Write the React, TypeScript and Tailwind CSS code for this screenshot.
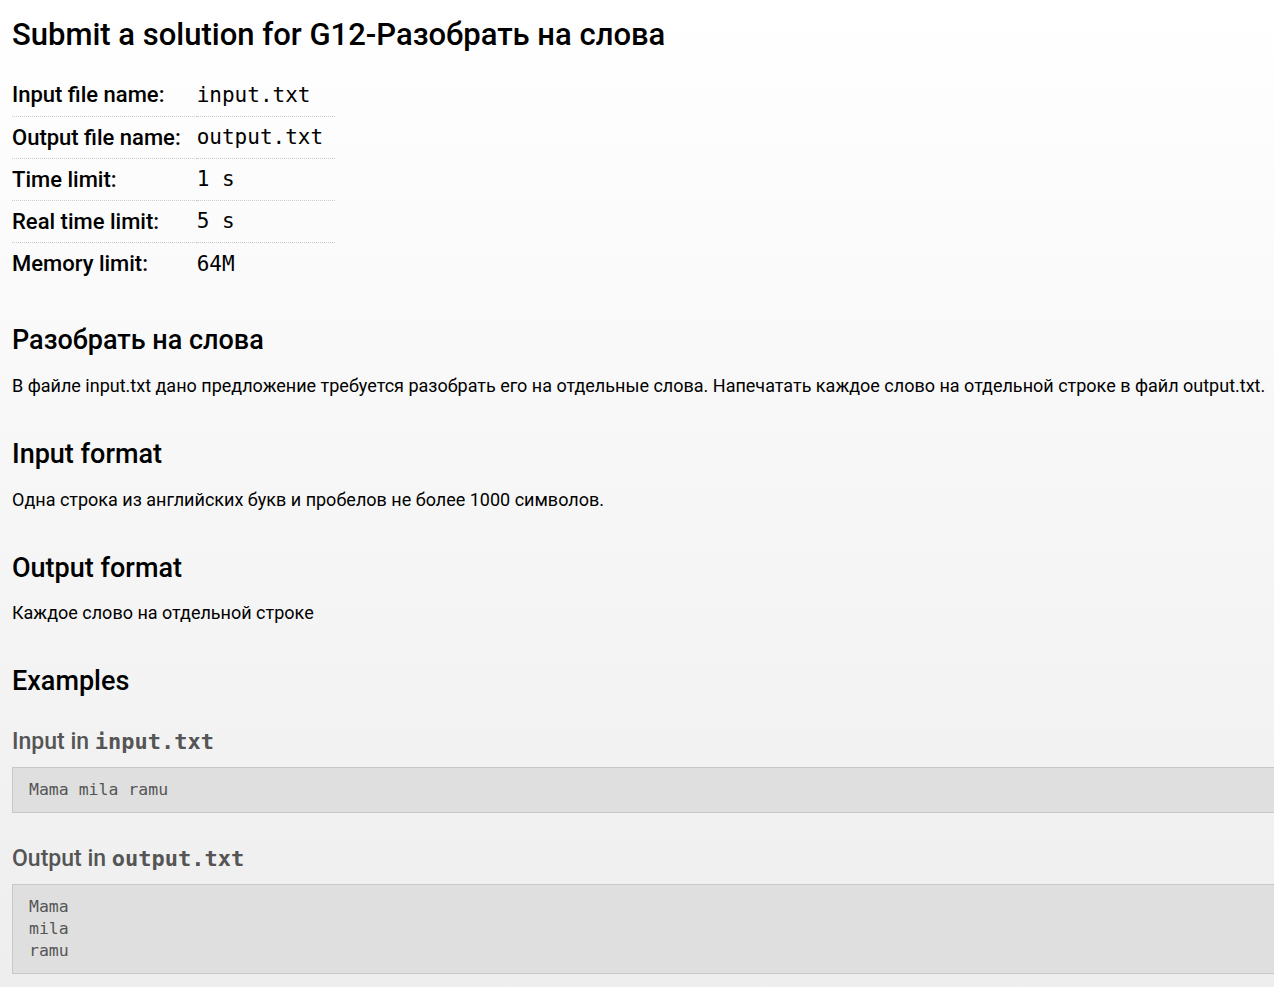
import React from 'react';

const limits = [
  { label: 'Input file name:', value: 'input.txt' },
  { label: 'Output file name:', value: 'output.txt' },
  { label: 'Time limit:', value: '1 s' },
  { label: 'Real time limit:', value: '5 s' },
  { label: 'Memory limit:', value: '64M' },
];

const mono = "font-['DejaVu_Sans_Mono',monospace]";

export default function App() {
  return (
    <div className="w-full min-h-[987px] overflow-hidden bg-gradient-to-b from-white to-[#eeeeee] font-['Roboto',sans-serif] text-black">
      <div className="w-[1320px] pl-3 pt-[15px]">
        <h1 className="text-[31px] font-medium leading-[40px]">Submit a solution for G12-Разобрать на слова</h1>

        {/* Limits table */}
        <table className="mt-[19px] border-collapse">
          <tbody>
            {limits.map((row, i) => (
              <tr key={row.label} className={i < limits.length - 1 ? 'border-b border-dotted border-[#cccccc]' : ''}>
                <td className="h-[42px] pr-4 text-[22px] font-medium whitespace-nowrap">{row.label}</td>
                <td className={`h-[42px] w-[138px] pt-[2px] text-[21px] ${mono} whitespace-pre`}>{row.value}</td>
              </tr>
            ))}
          </tbody>
        </table>

        <h2 className="mt-[38px] text-[27px] font-medium leading-[36px]">Разобрать на слова</h2>
        <p className="mt-[15px] text-[18px] leading-[26px]">
          В файле input.txt дано предложение требуется разобрать его на отдельные слова. Напечатать каждое слово на отдельной строке в файл output.txt.
        </p>

        <h2 className="mt-[37px] text-[27px] font-medium leading-[36px]">Input format</h2>
        <p className="mt-[15px] text-[18px] leading-[26px]">Одна строка из английских букв и пробелов не более 1000 символов.</p>

        <h2 className="mt-[37px] text-[27px] font-medium leading-[36px]">Output format</h2>
        <p className="mt-[14px] text-[18px] leading-[26px]">Каждое слово на отдельной строке</p>

        <h2 className="mt-[37px] text-[27px] font-medium leading-[36px]">Examples</h2>

        <h3 className="mt-[27px] text-[23px] font-medium leading-[32px] text-[#555555]">
          Input in <code className={`${mono} font-bold text-[22px]`}>input.txt</code>
        </h3>
        <pre className={`mt-[9px] border border-[#c8c8c8] bg-[#dfdfdf] px-4 py-[11px] text-[16.5px] leading-[22px] text-[#555555] ${mono}`}>Mama mila ramu</pre>

        <h3 className="mt-[30px] text-[23px] font-medium leading-[32px] text-[#555555]">
          Output in <code className={`${mono} font-bold text-[22px]`}>output.txt</code>
        </h3>
        <pre className={`mt-[9px] border border-[#c8c8c8] bg-[#dfdfdf] px-4 py-[11px] text-[16.5px] leading-[22px] text-[#555555] ${mono}`}>{'Mama\nmila\nramu'}</pre>
      </div>
    </div>
  );
}
